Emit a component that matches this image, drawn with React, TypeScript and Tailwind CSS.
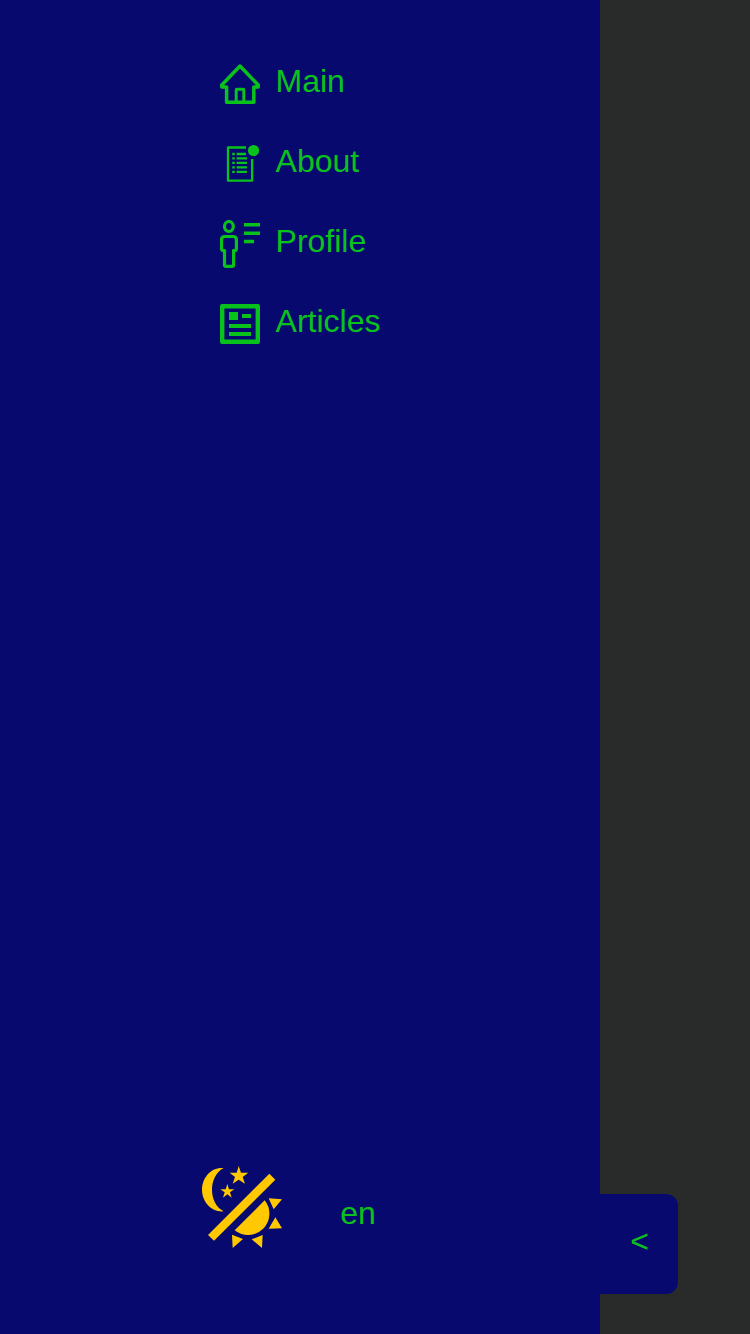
import React from "react";

const HomeIcon = () => (
  <svg className="h-12 w-10 shrink-0" viewBox="0 0 40 48" fill="none" stroke="currentColor" strokeLinejoin="round">
    <path strokeWidth="3.5" d="M20 6 1.8 25V27H6.6V42.3H33.8V27H38.2V25Z" />
    <path strokeWidth="3" d="M16.2 42V30.1Q16.2 29.3 17.1 29.3H22.9Q23.8 29.3 23.8 30.1V42" />
  </svg>
);

const AboutIcon = () => (
  <svg className="h-12 w-10 shrink-0" viewBox="0 0 40 48" fill="none" stroke="currentColor" strokeWidth="2.3" strokeLinejoin="round">
    <path d="M26 7.5H8V40.7H32.1V19" />
    <path d="M12.2 14H14.8M12.2 18.4H14.8M12.2 22.8H14.8M12.2 27.3H14.8M12.2 31.9H14.8" />
    <path d="M16.6 14H26M16.6 18.4H27M16.6 22.8H27M16.6 27.3H27M16.6 31.9H27" />
    <circle cx="33.5" cy="10.5" r="5.6" fill="currentColor" stroke="none" />
  </svg>
);

const ProfileIcon = () => (
  <svg className="h-12 w-10 shrink-0" viewBox="0 0 40 48" fill="none" stroke="currentColor" strokeWidth="3.2">
    <ellipse cx="8.9" cy="6.5" rx="4.4" ry="5" />
    <path d="M4.5 29.8V44.7Q4.5 46.4 6 46.4H12Q13.6 46.4 13.6 44.7V29.8M5.5 30.6H3.2Q1.5 30.6 1.5 28.6V19.7Q1.5 16.5 4.7 16.5H13.2Q16.4 16.5 16.4 19.7V28.6Q16.4 30.6 14.7 30.6H12.5" />
    <path strokeWidth="3.5" d="M24 4.8H40M24 13.2H40M24 21.4H34.1" />
  </svg>
);

const ArticlesIcon = () => (
  <svg className="h-12 w-10 shrink-0" viewBox="0 0 40 48" fill="currentColor">
    <rect x="2.2" y="6.2" width="35.6" height="35.6" fill="none" stroke="currentColor" strokeWidth="4.4" strokeLinejoin="round" />
    <path d="M9 12H18V20H9ZM22 14H31V18H22ZM9 24H31V28H9ZM9 32H31V36H9Z" />
  </svg>
);

const ThemeIcon = () => (
  <svg className="h-[82px] w-20" viewBox="21 33 240 246" fill="#ffc800">
    <path d="M86 39C46 36 21 70 21 104C21 141 50 172 86 169C62 156 51 130 51 104C51 78 62 52 86 39Z" />
    <path d="M131 33 138 53 160 53 143 66 150 86 131 74 113 86 120 66 104 53 125 53Z" />
    <path d="M97 87 102 103 118 103 105 112 110 128 97 118 84 128 89 112 76 103 92 103Z" />
    <path d="M223 56 241 74 57 257 39 240Z" />
    <path d="M209 136A64 64 0 0 1 119 226Z" />
    <path d="M221 130 261 133 236 163ZM241 187 261 220 221 221ZM111 239 144 252 113 279ZM203 240 170 253 201 279Z" />
  </svg>
);

const links = [
  { label: "Main", Icon: HomeIcon },
  { label: "About", Icon: AboutIcon },
  { label: "Profile", Icon: ProfileIcon },
  { label: "Articles", Icon: ArticlesIcon },
];

export default function App() {
  return (
    <div className="flex h-[1334px] w-[750px] overflow-hidden bg-[#292b2a] font-['Liberation_Sans',Arial,sans-serif] text-[32px] leading-9 text-[#09c31c]">
      <aside className="flex w-[600px] shrink-0 flex-col items-center justify-between bg-[#07096f] pt-[60px] pb-[86px]">
        <nav className="flex flex-col gap-8">
          {links.map(({ label, Icon }) => (
            <a key={label} href="#" className="flex h-12 gap-4">
              <Icon />
              <span className="pt-[3px]">{label}</span>
            </a>
          ))}
        </nav>
        <div className="flex w-full items-start pl-[202px]">
          <button type="button" aria-label="Theme">
            <ThemeIcon />
          </button>
          <button type="button" className="ml-[58.2px] pt-[29px]">
            en
          </button>
        </div>
      </aside>
      <button type="button" className="mb-10 flex h-[100px] w-[78px] items-center justify-center self-end rounded-r-xl bg-[#07096f] pb-1.5 pl-px">
        &lt;
      </button>
    </div>
  );
}
